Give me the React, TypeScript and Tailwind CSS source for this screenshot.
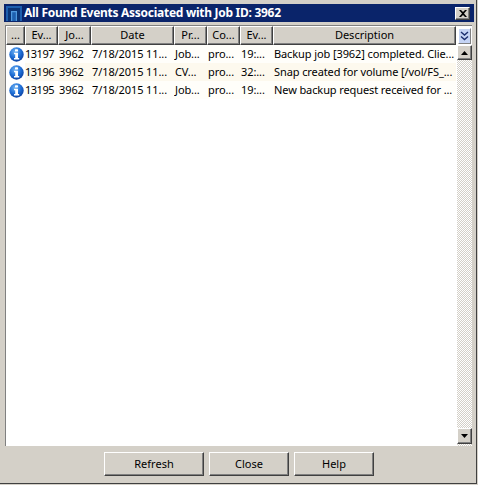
import React from 'react';

const columns = [
  { label: '...', width: 'w-[19px]' },
  { label: 'Ev...', width: 'w-[33px]' },
  { label: 'Jo...', width: 'w-[33px]' },
  { label: 'Date', width: 'w-[83px]' },
  { label: 'Pr...', width: 'w-[33px]' },
  { label: 'Co...', width: 'w-[33px]' },
  { label: 'Ev...', width: 'w-[33px]' },
  { label: 'Description', width: 'w-[183px]' },
];

const rows = [
  ['13197', '3962', '7/18/2015 11...', 'Job...', 'pro...', '19:...', 'Backup job [3962] completed. Clie...'],
  ['13196', '3962', '7/18/2015 11...', 'CV...', 'pro...', '32:...', 'Snap created for volume [/vol/FS_...'],
  ['13195', '3962', '7/18/2015 11...', 'Job...', 'pro...', '19:...', 'New backup request received for ...'],
];

const cellWidths = ['w-[33px]', 'w-[33px]', 'w-[83px]', 'w-[33px]', 'w-[33px]', 'w-[33px]', 'w-[182px]'];

const raised = 'border border-t-white border-l-white border-r-[#404040] border-b-[#404040] bg-[#d4d0c8] shadow-[inset_-1px_-1px_0_#808080]';

const InfoIcon = () => (
  <svg width="15" height="15" viewBox="0 0 15 15">
    <defs>
      <radialGradient id="info" cx="0.4" cy="0.3" r="0.75">
        <stop offset="0" stopColor="#6fb2f2" />
        <stop offset="0.55" stopColor="#1f6fd6" />
        <stop offset="1" stopColor="#0a3c9a" />
      </radialGradient>
    </defs>
    <circle cx="7.5" cy="7.5" r="7.2" fill="url(#info)" />
    <rect x="6" y="2.2" width="3" height="2.4" rx="0.6" fill="#fff" />
    <path d="M5 5.8h4v5.2h1.2v1.4H5V11h1.2V7.2H5z" fill="#fff" />
  </svg>
);

const AppIcon = () => (
  <svg width="16" height="15" viewBox="0 0 16 15">
    <rect width="16" height="15" fill="#1d5fae" />
    <path d="M2 15V2h12v13h-3V5H5v10z" fill="#0b3576" />
    <path d="M5 15V5h6v10h-1.2V6.2H6.2V15z" fill="#4f9ae0" />
  </svg>
);

export default function App() {
  return (
    <div className="w-[478px] h-[485px] bg-[#d4d0c8] pr-[1px] pb-[1px] overflow-hidden">
      <div className="h-full border-b border-b-[#404040] border-r border-r-[#404040] pt-[4px] pl-[4px] pr-[2px] flex flex-col font-['Noto_Sans',sans-serif] text-[11px] text-black">
        {/* title bar */}
        <div className="h-[18px] bg-[#0a246a] flex items-center pl-[2px] pr-[4px] shrink-0">
          <AppIcon />
          <span className="ml-[2px] text-white font-bold text-[12px] tracking-[-0.28px]">
            All Found Events Associated with Job ID: 3962
          </span>
          <button className={`ml-auto w-[15px] h-[13px] flex items-center justify-center ${raised}`}>
            <svg width="8" height="7" viewBox="0 0 8 7">
              <path d="M0 0h2l2 2 2-2h2L5 3.5 8 7H6L4 5 2 7H0l3-3.5z" fill="#000" />
            </svg>
          </button>
        </div>

        {/* table */}
        <div className="mt-[3px] h-[421px] bg-white border-l border-t border-[#808080] flex flex-col shrink-0 ml-[1px] mr-[2px]">
          <div className="h-[18px] flex shrink-0">
            {columns.map((c, i) => (
              <div key={i} className={`${c.width} h-[19px] ${raised} flex items-center justify-center shrink-0`}>
                {c.label}
              </div>
            ))}
            <div className="ml-[2px] w-[13px] h-[16px] mt-[2px] bg-[#c5d4f4] border border-[#808080] border-t-white border-l-white flex items-center justify-center">
              <svg width="9" height="10" viewBox="0 0 9 10" fill="none" stroke="#1c2f6e" strokeWidth="1.4">
                <path d="M1 1l3.5 3L8 1M1 5.5l3.5 3 3.5-3" />
              </svg>
            </div>
          </div>
          <div className="flex-1 flex min-h-0 pt-[1px]">
            <div className="w-[450px] shrink-0 tracking-[-0.1px]">
              {rows.map((r, i) => (
                <div key={i} className="h-[18px] flex items-center bg-white">
                  <div className="w-[19px] shrink-0 flex justify-center pl-[1px]">
                    <InfoIcon />
                  </div>
                  <div className={`flex items-center h-full flex-1 ${i === 1 ? 'bg-[#fdf9ee]' : 'bg-[#fffefa]'}`}>
                    {r.map((v, j) => (
                      <div key={j} className={`${cellWidths[j]} shrink-0 ${j === 0 ? 'tracking-[-0.5px]' : 'pl-[1px]'} whitespace-nowrap overflow-hidden`}>
                        {v}
                      </div>
                    ))}
                  </div>
                </div>
              ))}
            </div>
            <div className="w-[15px] ml-[1px] flex flex-col bg-[repeating-conic-gradient(#d4d0c8_0%_25%,#ffffff_0%_50%)] bg-[length:2px_2px]">
              <button className={`h-[15px] flex items-center justify-center ${raised}`}>
                <svg width="7" height="4" viewBox="0 0 7 4"><path d="M3.5 0L7 4H0z" fill="#000" /></svg>
              </button>
              <div className="flex-1" />
              <button className={`h-[16px] flex items-center justify-center mb-[2px] ${raised}`}>
                <svg width="7" height="4" viewBox="0 0 7 4"><path d="M0 0h7L3.5 4z" fill="#000" /></svg>
              </button>
            </div>
          </div>
        </div>

        {/* buttons */}
        <div className="flex gap-[5px] mt-[6px] pl-[100px]">
          <button className={`w-[100px] h-[24px] ${raised}`}>Refresh</button>
          <button className={`w-[80px] h-[24px] ${raised}`}>Close</button>
          <button className={`w-[80px] h-[24px] ${raised}`}>Help</button>
        </div>
      </div>
    </div>
  );
}
